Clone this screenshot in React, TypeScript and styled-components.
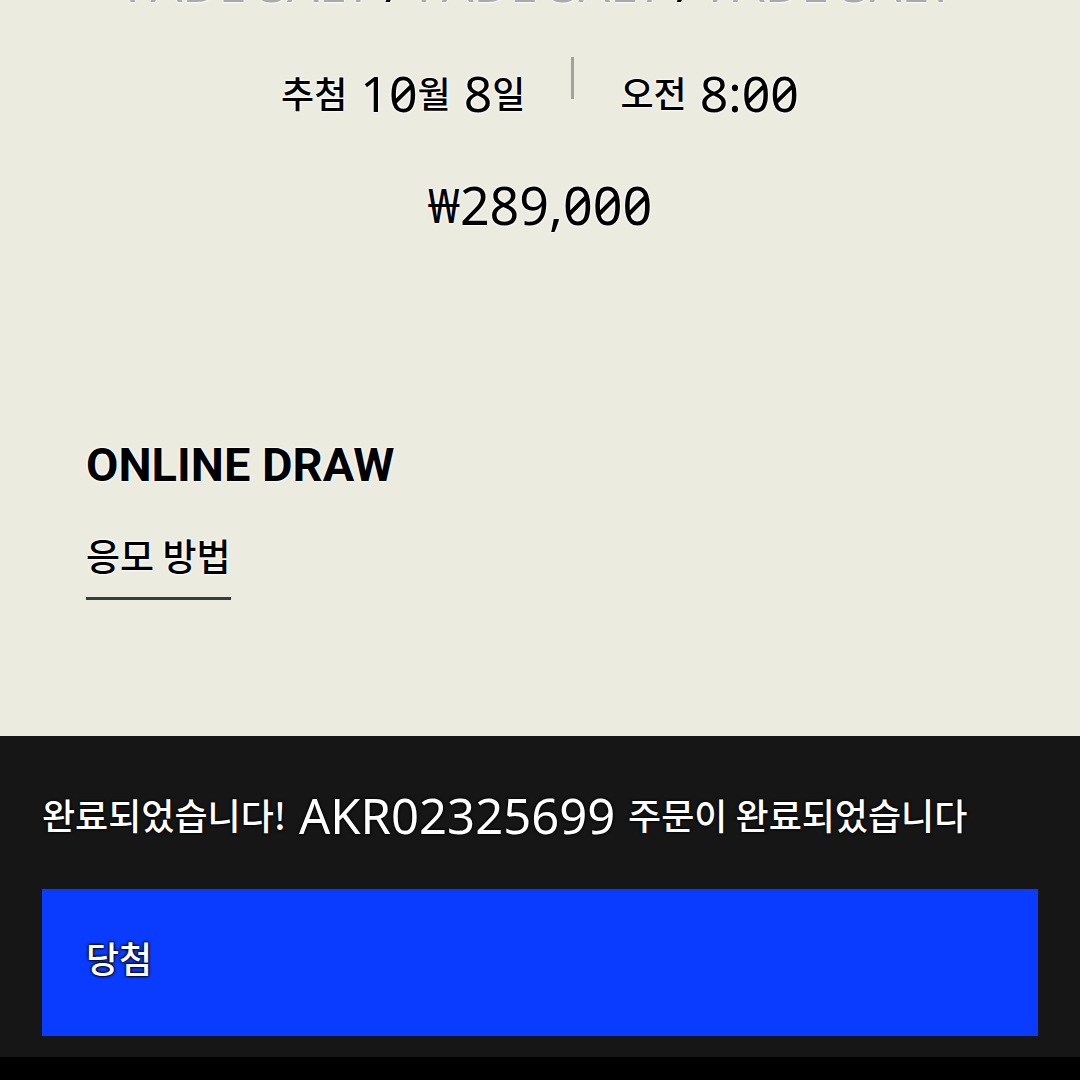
import React from "react";
import styled, { createGlobalStyle } from "styled-components";

const GlobalStyle = createGlobalStyle`
  *, *::before, *::after { box-sizing: border-box; }
  body {
    margin: 0;
    background: #000;
    font-family: "Noto Sans", "Noto Sans CJK KR", sans-serif;
  }
  h2, p { margin: 0; font-weight: 400; }
`;

const Page = styled.div`
  display: flex;
  flex-direction: column;
`;

const Product = styled.main`
  display: flex;
  flex-direction: column;
  background: #ebebdf;
  color: #000;
  text-shadow: 0 0 2px #fff, 0 0 3px #fff, 0 0 3px #fff;
  padding-bottom: 136px;
`;

const ColorClip = styled.div`
  height: 4px;
  overflow: hidden;
  display: flex;
  align-items: flex-end;
  justify-content: center;
`;

const ColorName = styled.p`
  font-size: 50px;
  line-height: 42px;
  white-space: nowrap;
  color: #aaa;
`;

const Slash = styled.span`
  color: #000;
`;

const Schedule = styled.div`
  display: flex;
  justify-content: center;
  align-items: flex-start;
  gap: 46px;
  margin-top: 53px;
`;

const Figure = styled.p`
  font-size: 50px;
  line-height: 72px;
  white-space: nowrap;
  font-feature-settings: "zero" 1;
`;

const Hangul = styled.span<{ $size: number }>`
  font-family: "Noto Sans CJK KR", sans-serif;
  font-size: ${(p) => p.$size}px;
  font-weight: 500;
  line-height: 1;
  vertical-align: 4px;
`;

const Won = styled.span`
  font-size: 48px;
  line-height: 1;
  vertical-align: 2px;
`;

const Divider = styled.span`
  width: 3px;
  height: 42px;
  background: #a3a39c;
`;

const Price = styled(Figure)`
  margin-top: 40px;
  font-size: 52px;
  text-align: center;
`;

const Draw = styled.section`
  display: flex;
  flex-direction: column;
  align-items: flex-start;
  padding: 188px 86px 0;
`;

const DrawTitle = styled.h2`
  font-family: Roboto, sans-serif;
  font-size: 47px;
  font-weight: 700;
  line-height: 72px;
`;

const HowTo = styled.a`
  display: block;
  margin-top: 36px;
  border-bottom: 3px solid #3a3b3b;
  color: inherit;
  text-decoration: none;
  line-height: 56px;
`;

const Footer = styled.footer`
  background: #161616;
  color: #fff;
  padding: 46px 42px 21px;
  text-shadow: 0 0 3px #000, 0 0 3px #000;
`;

const Notice = styled.p`
  font-size: 49px;
  line-height: 66px;
  white-space: nowrap;
`;

const ResultButton = styled.button`
  display: flex;
  width: 100%;
  height: 147px;
  margin-top: 41px;
  padding: 50px 44px;
  border: 0;
  background: #0a3cff;
  color: inherit;
  text-align: left;
  text-shadow: 0 0 2px #000, 0 0 3px #000, 0 0 3px #000;
`;

export default function App() {
  return (
    <Page>
      <GlobalStyle />
      <Product>
        <ColorClip>
          <ColorName>
            FADE SALT <Slash>/</Slash> FADE SALT <Slash>/</Slash> FADE SALT
          </ColorName>
        </ColorClip>
        <Schedule>
          <Figure>
            <Hangul $size={36}>추첨</Hangul> 10<Hangul $size={36}>월</Hangul> 8
            <Hangul $size={36}>일</Hangul>
          </Figure>
          <Divider />
          <Figure>
            <Hangul $size={36}>오전</Hangul> 8:00
          </Figure>
        </Schedule>
        <Price>
          <Won>₩</Won>289,000
        </Price>
        <Draw>
          <DrawTitle>ONLINE DRAW</DrawTitle>
          <HowTo href="#how-to-enter">
            <Hangul $size={37}>응모 방법</Hangul>
          </HowTo>
        </Draw>
      </Product>
      <Footer>
        <Notice>
          <Hangul $size={36}>완료되었습니다!</Hangul> AKR02325699{" "}
          <Hangul $size={36}>주문이 완료되었습니다</Hangul>
        </Notice>
        <ResultButton type="button">
          <Hangul $size={36}>당첨</Hangul>
        </ResultButton>
      </Footer>
    </Page>
  );
}
